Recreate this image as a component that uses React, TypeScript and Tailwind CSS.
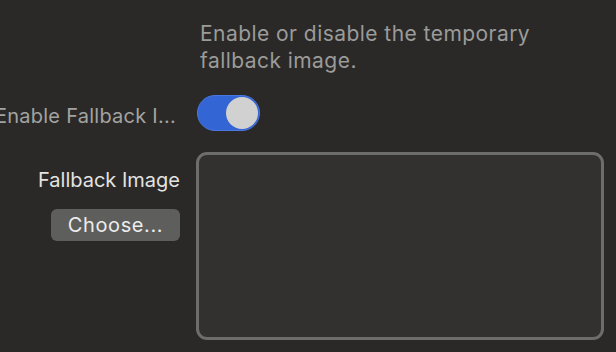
import React from "react";

export default function App() {
  const font = { fontFamily: "Inter, 'Noto Sans', sans-serif" };
  return (
    <div
      className="w-[616px] h-[352px] overflow-hidden bg-[#2a2927] pt-[20px] pr-[12px]"
      style={font}
    >
      <div className="flex gap-[16px]">
        <div className="w-[184px] shrink-0" />
        <p className="text-[21px] leading-[27px] text-[#9b9b9a] tracking-[0.45px]">
          Enable or disable the temporary
          <br />
          fallback image.
        </p>
      </div>

      <div className="flex gap-[16px] items-center mt-[21px]">
        <div className="w-[181px] shrink-0 flex justify-end pr-[5px]">
          <span className="shrink-0 whitespace-nowrap text-[20px] leading-[24px] text-[#a3a3a2] mt-[5px] tracking-[0.25px]">
            Enable Fallback I...
          </span>
        </div>
        <div className="w-[63px] h-[36px] rounded-full bg-[#3365d4] border border-[#4a78e0] relative shrink-0">
          <div className="absolute right-[1px] top-[1px] w-[32px] h-[32px] rounded-full bg-[#d1d1d1]" />
        </div>
      </div>

      <div className="flex gap-[15px] items-start mt-[21px]">
        <div className="w-[181px] shrink-0 flex flex-col items-end pt-[16px]">
          <span className="whitespace-nowrap text-[20px] leading-[24px] text-[#e3e3e2] mr-[1px]">
            Fallback Image
          </span>
          <button className="mt-[17px] w-[129px] h-[32px] rounded-[6px] bg-[#5e5e5d] text-[20px] leading-[24px] text-[#ececec] tracking-[0.6px] flex items-center justify-center mr-[1px]">
            Choose...
          </button>
        </div>
        <div className="flex-1 h-[188px] rounded-[11px] border-[3px] border-[#6d6d6c] bg-[#323130]" />
      </div>
    </div>
  );
}
